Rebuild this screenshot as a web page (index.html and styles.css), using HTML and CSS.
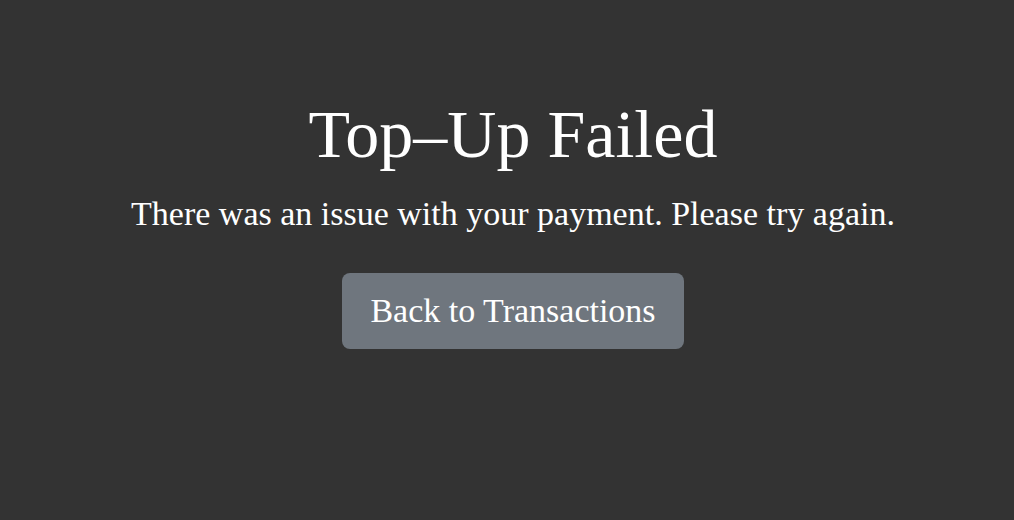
FILE: index.html
```html
<!DOCTYPE html>
<html lang="en">
<head>
<meta charset="utf-8">
<title>Top-Up Failed</title>
<link rel="stylesheet" href="styles.css">
</head>
<body>
<main class="page">
  <h1 class="title">Top–Up Failed</h1>
  <p class="message">There was an issue with your payment. Please try again.</p>
  <a class="btn" href="#">Back to Transactions</a>
</main>
</body>
</html>
```
FILE: styles.css
```css
html, body {
  margin: 0;
  padding: 0;
  height: 100%;
}
body {
  background: #333333;
  color: #ffffff;
  font-family: "Liberation Serif", serif;
}
.page {
  display: flex;
  flex-direction: column;
  align-items: center;
  padding: 94px 0 0 12px;
  text-align: center;
}
.title {
  margin: 0;
  font-size: 68px;
  font-weight: 400;
  line-height: 1.2;
}
.message {
  margin: 12px 0 0;
  font-size: 34px;
  line-height: 1.5;
}
.btn {
  margin-top: 34px;
  display: inline-flex;
  align-items: center;
  justify-content: center;
  width: 342px;
  height: 76px;
  box-sizing: border-box;
  background: #6f767e;
  border-radius: 8px;
  color: #ffffff;
  text-decoration: none;
  font-size: 34px;
}
```
